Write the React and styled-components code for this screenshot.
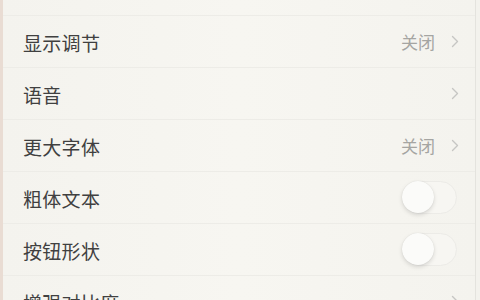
import React from 'react';
import styled, { createGlobalStyle } from 'styled-components';

const Global = createGlobalStyle`
  html, body {
    margin: 0;
    padding: 0;
    background: #f5f4ef;
  }
  body {
    font-family: "Noto Sans CJK SC", "Noto Sans", sans-serif;
    width: 480px;
    height: 300px;
    overflow: hidden;
  }
`;

const Screen = styled.div`
  width: 480px;
  height: 300px;
  overflow: hidden;
  display: flex;
  background: #f5f4ef;
`;

const LeftEdge = styled.div`
  width: 3px;
  flex-shrink: 0;
  background: #e9dcd3;
`;

const RightEdge = styled.div`
  width: 4px;
  flex-shrink: 0;
  border-left: 1px solid #e4e3de;
  background: #f3f2ed;
`;

const List = styled.div`
  flex: 1;
  padding-top: 15px;
  background: linear-gradient(90deg, #f4f3ee 0%, #f7f6f1 50%, #f4f3ee 100%);
`;

const Row = styled.div`
  height: 52px;
  box-sizing: border-box;
  border-top: 1px solid #edece7;
  display: flex;
  align-items: center;
  padding: 0 14px 0 20px;
`;

const Label = styled.span`
  flex: 1;
  font-size: 19px;
  color: #404040;
  letter-spacing: 0.3px;
  padding-top: 1px;
`;

const Value = styled.span`
  font-size: 17px;
  color: #a5a5a2;
  margin-right: 16px;
`;

const Chevron = styled.svg`
  width: 8px;
  height: 13px;
  margin-right: 2px;
`;

const Track = styled.div`
  width: 54px;
  height: 33px;
  box-sizing: border-box;
  border-radius: 17px;
  border: 1.5px solid #ecebe7;
  background: #f7f6f2;
  position: relative;
  margin-right: 4px;
`;

const Knob = styled.div`
  position: absolute;
  left: -2px;
  top: -1px;
  width: 32px;
  height: 32px;
  border-radius: 50%;
  background: #fbfbf9;
  box-shadow: 0 2px 4px rgba(0, 0, 0, 0.13), 0 0 1px rgba(0, 0, 0, 0.12);
`;

const Arrow = () => (
  <Chevron viewBox="0 0 8 13">
    <path d="M1.5 1.5 L6.5 6.5 L1.5 11.5" fill="none" stroke="#c6c6c3" strokeWidth="1.4" strokeLinecap="round" strokeLinejoin="round" />
  </Chevron>
);

const Switch = () => (
  <Track>
    <Knob />
  </Track>
);

const rows = [
  { label: '显示调节', value: '关闭', kind: 'link' },
  { label: '语音', kind: 'link' },
  { label: '更大字体', value: '关闭', kind: 'link' },
  { label: '粗体文本', kind: 'switch' },
  { label: '按钮形状', kind: 'switch' },
  { label: '增强对比度', kind: 'link' },
];

export default function App() {
  return (
    <>
      <Global />
      <Screen>
        <LeftEdge />
        <List>
          {rows.map((r) => (
            <Row key={r.label}>
              <Label>{r.label}</Label>
              {r.value && <Value>{r.value}</Value>}
              {r.kind === 'link' ? <Arrow /> : <Switch />}
            </Row>
          ))}
        </List>
        <RightEdge />
      </Screen>
    </>
  );
}
